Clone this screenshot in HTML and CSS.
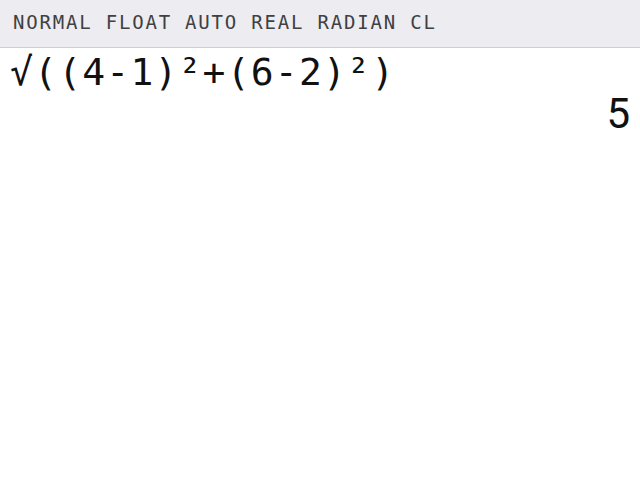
FILE: index.html
```html
<!DOCTYPE html>
<html>
<head>
<meta charset="utf-8">
<link rel="stylesheet" href="styles.css">
</head>
<body>
<div class="status">NORMAL FLOAT AUTO REAL RADIAN CL</div>
<div class="screen">
  <div class="expr">√((4-1)²+(6-2)²)</div>
  <div class="result">5</div>
</div>
</body>
</html>
```
FILE: styles.css
```css
html, body {
  margin: 0;
  padding: 0;
  background: #ffffff;
}
.status {
  box-sizing: border-box;
  height: 48px;
  padding: 10px 0 0 13px;
  background: #edecf1;
  border-bottom: 1px solid #cfced3;
  font-family: "DejaVu Sans Mono", monospace;
  font-size: 19px;
  letter-spacing: 1.8px;
  line-height: 24px;
  color: #404043;
}
.screen {
  display: flex;
  flex-direction: column;
  padding: 0 10px;
}
.expr {
  font-family: "DejaVu Sans Mono", monospace;
  font-size: 38px;
  letter-spacing: 1.2px;
  line-height: 48px;
  color: #111111;
}
.result {
  align-self: flex-end;
  font-family: Roboto, sans-serif;
  font-size: 42px;
  line-height: 36px;
  color: #111111;
}
```
